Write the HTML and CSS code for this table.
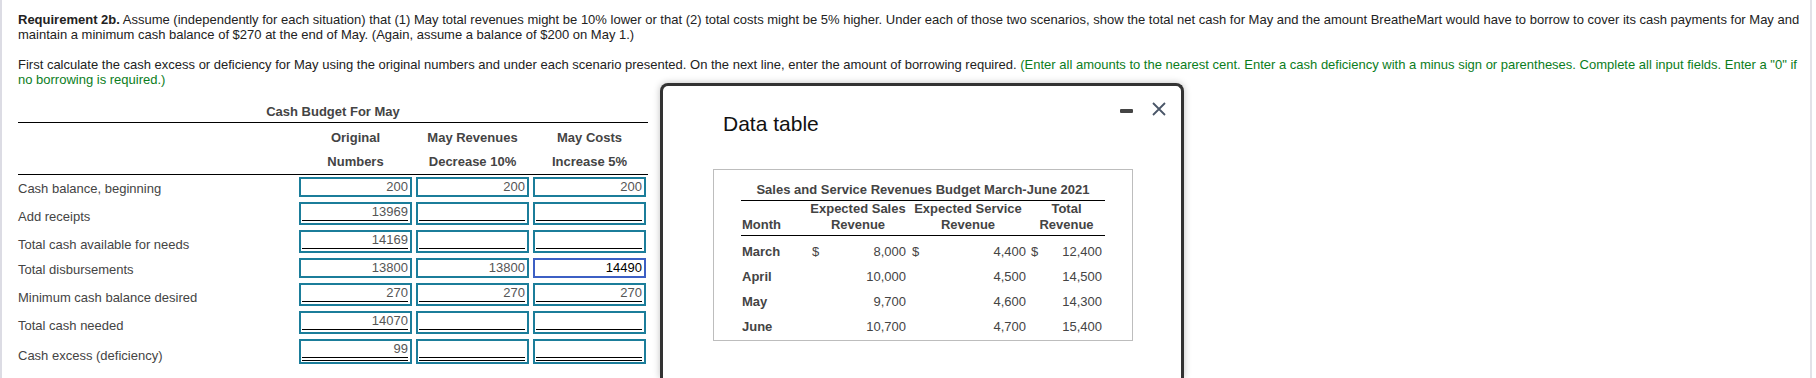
FILE: index.html
```html
<!DOCTYPE html>
<html lang="en">
  <head>
    <meta charset="UTF-8" />
    <meta name="viewport" content="width=device-width, initial-scale=1.0" />
    <title>Requirement 2b</title>
    <link rel="stylesheet" href="styles.css">
  </head>
  <body>
    <div class="page">
      <p class="intro">
        <b>Requirement 2b.</b> Assume (independently for each situation) that (1) May total revenues might be 10% lower or that (2) total costs might be 5% higher. Under each of those two scenarios, show the total net cash for May and the amount BreatheMart would have to borrow to cover its cash payments for May and<br>maintain a minimum cash balance of $270 at the end of May. (Again, assume a balance of $200 on May 1.)
      </p>
      <p class="intro">
        First calculate the cash excess or deficiency for May using the original numbers and under each scenario presented. On the next line, enter the amount of borrowing required. <span class="hint">(Enter all amounts to the nearest cent. Enter a cash deficiency with a minus sign or parentheses. Complete all input fields. Enter a "0" if<br>no borrowing is required.)</span>
      </p>

      <div class="budget">
        <div class="budget-title">Cash Budget For May</div>
        <div class="budget-row budget-head">
          <div></div>
          <div class="col-head">Original<br>Numbers</div>
          <div class="col-head">May Revenues<br>Decrease 10%</div>
          <div class="col-head">May Costs<br>Increase 5%</div>
        </div>

        <div class="budget-row">
          <div class="label">Cash balance, beginning</div>
          <div class="field"><div class="val">200</div></div>
          <div class="field"><div class="val">200</div></div>
          <div class="field"><div class="val">200</div></div>
        </div>
        <div class="budget-row">
          <div class="label">Add receipts</div>
          <div class="field"><div class="val ul">13969</div></div>
          <div class="field"><div class="val ul"></div></div>
          <div class="field"><div class="val ul"></div></div>
        </div>
        <div class="budget-row">
          <div class="label">Total cash available for needs</div>
          <div class="field"><div class="val ul">14169</div></div>
          <div class="field"><div class="val ul"></div></div>
          <div class="field"><div class="val ul"></div></div>
        </div>
        <div class="budget-row">
          <div class="label">Total disbursements</div>
          <div class="field"><div class="val">13800</div></div>
          <div class="field"><div class="val">13800</div></div>
          <div class="field focused"><div class="val">14490</div></div>
        </div>
        <div class="budget-row">
          <div class="label">Minimum cash balance desired</div>
          <div class="field"><div class="val ul">270</div></div>
          <div class="field"><div class="val ul">270</div></div>
          <div class="field"><div class="val ul">270</div></div>
        </div>
        <div class="budget-row">
          <div class="label">Total cash needed</div>
          <div class="field"><div class="val ul">14070</div></div>
          <div class="field"><div class="val ul"></div></div>
          <div class="field"><div class="val ul"></div></div>
        </div>
        <div class="budget-row last">
          <div class="label">Cash excess (deficiency)</div>
          <div class="field"><div class="val dbl">99</div></div>
          <div class="field"><div class="val dbl"></div></div>
          <div class="field"><div class="val dbl"></div></div>
        </div>
      </div>
    </div>

    <div class="dialog">
      <span class="minimize"></span>
      <svg class="close" width="14" height="14" viewBox="0 0 14 14">
        <path d="M1 1 L13 13 M13 1 L1 13" stroke="#4a5668" stroke-width="1.8" fill="none" />
      </svg>
      <h2 class="dialog-title">Data table</h2>
      <div class="data-box">
        <div class="data-caption">Sales and Service Revenues Budget March-June 2021</div>
        <table class="data-table">
          <thead>
            <tr>
              <th class="month">Month</th>
              <th>Expected Sales<br>Revenue</th>
              <th>Expected Service<br>Revenue</th>
              <th>Total<br>Revenue</th>
            </tr>
          </thead>
          <tbody>
            <tr>
              <td class="month">March</td>
              <td class="num"><span class="cur">$</span>8,000</td>
              <td class="num"><span class="cur">$</span>4,400</td>
              <td class="num"><span class="cur">$</span>12,400</td>
            </tr>
            <tr>
              <td class="month">April</td>
              <td class="num">10,000</td>
              <td class="num">4,500</td>
              <td class="num">14,500</td>
            </tr>
            <tr>
              <td class="month">May</td>
              <td class="num">9,700</td>
              <td class="num">4,600</td>
              <td class="num">14,300</td>
            </tr>
            <tr>
              <td class="month">June</td>
              <td class="num">10,700</td>
              <td class="num">4,700</td>
              <td class="num">15,400</td>
            </tr>
          </tbody>
        </table>
      </div>
    </div>
  </body>
</html>
```

FILE: styles.css
```css
* {
  margin: 0;
  padding: 0;
  box-sizing: border-box;
}
body {
  font-family: "Liberation Sans", Arial, sans-serif;
  font-size: 13px;
  line-height: 15px;
  color: #222;
  background-color: #fff;
  height: 378px;
  overflow: hidden;
}
.page {
  width: 1812px;
  height: 378px;
  padding: 12px 16px 0 16px;
  border-left: 2px solid #dcdce4;
  border-right: 2px solid #e2e2e8;
}
.intro {
  white-space: nowrap;
  margin-bottom: 15px;
}
.intro b {
  font-weight: bold;
}
.hint {
  color: #0b7d1c;
}

/* cash budget */
.budget {
  width: 630px;
  margin-top: 17px;
  color: #444;
}
.budget-title {
  text-align: center;
  font-weight: bold;
  padding-bottom: 3px;
  border-bottom: 1px solid #000;
}
.budget-row {
  display: grid;
  grid-template-columns: 277px 113px 113px 113px;
  column-gap: 4px;
  align-items: end;
  margin-bottom: 5px;
}
.budget-row.last {
  margin-bottom: 0;
}
.budget-head {
  align-items: start;
  padding-top: 3px;
  border-bottom: 1px solid #000;
  margin-bottom: 2px;
}
.col-head {
  text-align: center;
  font-weight: bold;
  line-height: 24px;
}
.label {
  padding-bottom: 1px;
}
.field {
  border: 2px solid #1b7d9a;
  padding: 0 2px 0 1px;
}
.field.focused {
  border-color: #3c5fc4;
}
.field.focused .val {
  color: #000;
}
.val {
  height: 16px;
  padding-bottom: 1px;
  text-align: right;
  color: #555;
}
.val.ul {
  height: 17px;
  border-bottom: 1px solid #000;
  margin-bottom: 2px;
}
.val.dbl {
  height: 20px;
  border-bottom: 4px double #000;
  margin-bottom: 1px;
}

/* data table window */
.dialog {
  position: absolute;
  left: 660px;
  top: 83px;
  width: 524px;
  height: 295px;
  background-color: #fff;
  border: 3px solid #333;
  border-bottom: none;
  border-radius: 8px 8px 0 0;
  box-shadow: 0 0 7px rgba(0, 0, 0, 0.25);
}
.minimize {
  position: absolute;
  left: 457px;
  top: 23px;
  width: 13px;
  height: 4px;
  background-color: #444;
  border-radius: 1px;
}
.close {
  position: absolute;
  left: 489px;
  top: 16px;
}
.dialog-title {
  font-size: 21px;
  font-weight: normal;
  line-height: 24px;
  color: #111;
  padding: 26px 0 0 60px;
  margin-bottom: 33px;
}
.data-box {
  width: 420px;
  margin-left: 50px;
  border: 1px solid #bdbdbd;
  padding: 12px 27px 1px 27px;
  color: #444;
}
.data-caption {
  text-align: center;
  font-weight: bold;
  padding-bottom: 3px;
  border-bottom: 1px solid #000;
}
.data-table {
  width: 364px;
  border-collapse: collapse;
  table-layout: fixed;
}
.data-table th {
  font-weight: bold;
  line-height: 16px;
  padding-bottom: 2px;
  vertical-align: bottom;
  text-align: center;
  border-bottom: 1px solid #000;
}
.data-table th:nth-child(1) {
  width: 67px;
}
.data-table th:nth-child(2) {
  width: 100px;
}
.data-table th:nth-child(3) {
  width: 120px;
}
.data-table th:nth-child(4) {
  width: 77px;
}
.data-table th.month {
  text-align: left;
  padding-left: 1px;
}
.data-table td {
  padding: 5px 0;
}
.data-table tbody tr:first-child td {
  padding-top: 8px;
}
.data-table td.month {
  font-weight: bold;
  padding-left: 1px;
}
.data-table td.num {
  text-align: right;
  padding-right: 2px;
}
.data-table td:last-child {
  padding-right: 3px;
}
.cur {
  float: left;
  padding-left: 4px;
}
.data-table td:last-child .cur {
  padding-left: 3px;
}
```
